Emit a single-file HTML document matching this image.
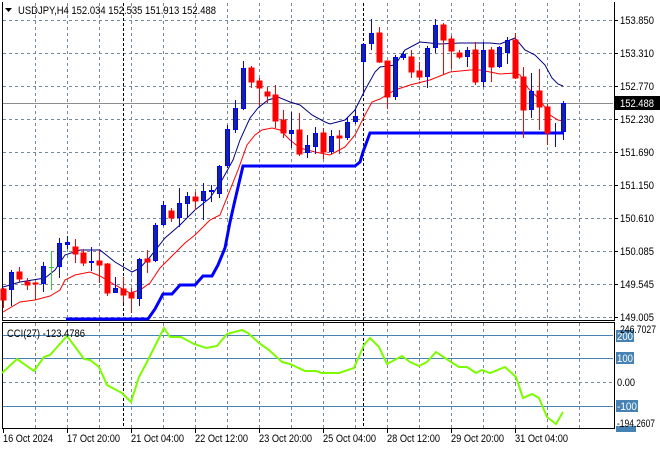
<!DOCTYPE html>
<html><head><meta charset="utf-8"><style>
html,body{margin:0;padding:0;background:#fff;}
svg{display:block;font-family:"Liberation Sans",sans-serif;}
</style></head><body>
<svg width="660" height="450" viewBox="0 0 660 450" xmlns="http://www.w3.org/2000/svg">
<rect width="660" height="450" fill="#fff"/>
<g stroke="#778899" stroke-width="1" stroke-dasharray="3,3" fill="none">
<path d="M3 20.5H613M3 53.5H613M3 86.5H613M3 119.5H613M3 152.5H613M3 185.5H613M3 218.5H613M3 251.5H613M3 284.5H613M3 317.5H613"/>
<path d="M35.5 3V320M67.5 3V320M99.5 3V320M131.5 3V320M163.5 3V320M195.5 3V320M227.5 3V320M259.5 3V320M291.5 3V320M323.5 3V320M355.5 3V320M387.5 3V320M419.5 3V320M451.5 3V320M483.5 3V320M515.5 3V320M547.5 3V320M579.5 3V320"/>
<path d="M35.5 323V428M67.5 323V428M99.5 323V428M131.5 323V428M163.5 323V428M195.5 323V428M227.5 323V428M259.5 323V428M291.5 323V428M323.5 323V428M355.5 323V428M387.5 323V428M419.5 323V428M451.5 323V428M483.5 323V428M515.5 323V428M547.5 323V428M579.5 323V428"/>
<path d="M3 382.5H613"/>
</g>
<g stroke="#000" stroke-dasharray="3,2"><path d="M123.5 3V428M363.5 3V428"/></g>
<path d="M3 103.5H613" stroke="#8c8c8c"/>
<g stroke="#000" fill="none"><path d="M2.5 2V320.5H614.5V2"/><path d="M2.5 322.5H614.5V428.5H2.5Z"/></g>
<polyline fill="none" stroke="#0000ff" stroke-width="3" points="66,319 148,319 155,309 163,294 172,294 180,285 195,285 203,276 212,276 218,265 225,248 230,222 235,200 243,166 355,166 360,162 363,152 370,133 563,133"/>
<polyline fill="none" stroke="#000080" stroke-width="1" points="3,287 20,282 45,278 55,270 65,255 80,250 100,250 115,262 132,272 140,268 150,257 165,238 180,225 195,210 210,198 222,180 233,160 240,140 250,118 258,108 268,100 278,97 290,102 300,105 312,115 325,122 330,124 345,120 355,110 365,90 375,72 380,67 395,65 405,50 420,42 440,44 460,43 490,43 500,44 505,42 515,38 525,50 535,55 545,65 552,78 558,84 563,86"/>
<polyline fill="none" stroke="#ff0000" stroke-width="1" points="3,312 20,302 35,300 50,296 60,290 65,280 75,275 90,272 100,276 115,285 130,293 140,290 150,283 160,268 170,258 185,243 195,235 210,220 220,215 230,190 238,170 247,145 255,135 262,130 272,128 280,130 290,140 300,148 315,152 330,155 345,147 355,135 365,115 372,102 380,99 395,90 410,85 430,80 450,72 470,70 480,70 500,74 515,73 520,75 528,88 540,100 550,115 558,120 563,121"/>
<g stroke-width="1">
<g stroke="#ff0000" fill="#ff0000">
<path d="M3.5 288V308M19.5 267V282M27.5 278V290M35.5 282V300M75.5 239V263M83.5 249V266M99.5 250V283M107.5 263V296M123.5 277V303M131.5 288V313M147.5 250V273M171.5 208V222M195.5 192V210M251.5 66V88M259.5 78V106M267.5 87V103M275.5 85V128M283.5 110V138M299.5 113V156M323.5 128V159M339.5 130V154M379.5 27V63M387.5 61V109M411.5 50V78M419.5 62V80M443.5 23V75M451.5 36V69M459.5 50V59M475.5 42V85M491.5 47V82M515.5 33V79M523.5 67V138M539.5 69V130M547.5 104V145"/>
<rect x="1" y="289" width="5" height="11"/><rect x="17" y="272" width="5" height="7"/><rect x="25" y="282" width="5" height="3"/><rect x="33" y="283" width="5" height="1"/>
<rect x="73" y="247" width="5" height="7"/><rect x="81" y="253" width="5" height="10"/><rect x="97" y="261" width="5" height="4"/><rect x="105" y="264" width="5" height="29"/>
<rect x="121" y="289" width="5" height="6"/><rect x="129" y="293" width="5" height="5"/><rect x="145" y="259" width="5" height="3"/><rect x="169" y="211" width="5" height="7"/>
<rect x="193" y="197" width="5" height="4"/><rect x="249" y="68" width="5" height="14"/><rect x="257" y="81" width="5" height="7"/><rect x="265" y="92" width="5" height="4"/>
<rect x="273" y="95" width="5" height="26"/><rect x="281" y="120" width="5" height="13"/><rect x="297" y="130" width="5" height="24"/><rect x="321" y="133" width="5" height="19"/>
<rect x="337" y="136" width="5" height="2"/><rect x="377" y="33" width="5" height="29"/><rect x="385" y="61" width="5" height="36"/><rect x="409" y="57" width="5" height="15"/>
<rect x="417" y="71" width="5" height="6"/><rect x="441" y="25" width="5" height="15"/><rect x="449" y="39" width="5" height="12"/><rect x="457" y="53" width="5" height="4"/>
<rect x="473" y="50" width="5" height="32"/><rect x="489" y="50" width="5" height="17"/><rect x="513" y="40" width="5" height="38"/><rect x="521" y="77" width="5" height="33"/>
<rect x="537" y="91" width="5" height="16"/><rect x="545" y="107" width="5" height="26"/>
</g>
<g stroke="#0000ff" fill="#14249e">
<path d="M11.5 270V306M43.5 262V292M59.5 238V278M67.5 236V249M91.5 247V271M115.5 277V293M139.5 258V306M155.5 223V262M163.5 201V226M179.5 188V227M187.5 192V217M203.5 183V220M211.5 185V202M219.5 165V198M227.5 125V168M235.5 100V133M243.5 61V110M291.5 112V148M307.5 135V158M315.5 127V154M331.5 130V154M347.5 117V140M355.5 109V124M363.5 43V95M371.5 19V50M395.5 55V100M403.5 51V60M427.5 46V88M435.5 19V53M467.5 47V67M483.5 42V87M499.5 46V68M507.5 37V64M531.5 73V118M555.5 123V147M563.5 101V140"/>
<rect x="9.5" y="272.5" width="4" height="17"/><rect x="41.5" y="266.5" width="4" height="17"/><rect x="57.5" y="243.5" width="4" height="23"/><rect x="65.5" y="242.5" width="4" height="2"/>
<rect x="89.5" y="261.5" width="4" height="1"/><rect x="113.5" y="288.5" width="4" height="4"/><rect x="137.5" y="259.5" width="4" height="39"/><rect x="153.5" y="225.5" width="4" height="35"/>
<rect x="161.5" y="205.5" width="4" height="19"/><rect x="177.5" y="203.5" width="4" height="14"/><rect x="185.5" y="196.5" width="4" height="7"/><rect x="201.5" y="191.5" width="4" height="9"/>
<rect x="209.5" y="190.5" width="4" height="1"/><rect x="217.5" y="166.5" width="4" height="27"/><rect x="225.5" y="129.5" width="4" height="36"/><rect x="233.5" y="108.5" width="4" height="21"/>
<rect x="241.5" y="68.5" width="4" height="40"/><rect x="289.5" y="130.5" width="4" height="3"/><rect x="305.5" y="145.5" width="4" height="7"/><rect x="313.5" y="133.5" width="4" height="13"/>
<rect x="329.5" y="136.5" width="4" height="15"/><rect x="345.5" y="122.5" width="4" height="15"/><rect x="353.5" y="116.5" width="4" height="5"/><rect x="361.5" y="44.5" width="4" height="17"/>
<rect x="369.5" y="33.5" width="4" height="10"/><rect x="393.5" y="57.5" width="4" height="39"/><rect x="401.5" y="54.5" width="4" height="3"/><rect x="425.5" y="48.5" width="4" height="28"/>
<rect x="433.5" y="25.5" width="4" height="22"/><rect x="465.5" y="50.5" width="4" height="6"/><rect x="481.5" y="50.5" width="4" height="31"/><rect x="497.5" y="47.5" width="4" height="19"/>
<rect x="505.5" y="40.5" width="4" height="12"/><rect x="529.5" y="91.5" width="4" height="18"/><rect x="553.5" y="132.5" width="4" height="1"/><rect x="561.5" y="103.5" width="4" height="28"/>
</g>
<path d="M51.5 251V290M49 267.5H54" stroke="#32cd32"/>
</g>
<g stroke="#4682b4"><path d="M3 335.5H613M3 358.5H613M3 406.5H613"/></g>
<polyline fill="none" stroke="#7cfc00" stroke-width="2" points="2,373 17,359 34,371 44,357 50,355 67,336 76,348 84,359 90,360 99,367 107,385 122,393 131,402 139,377 147,362 164,328 170,337 181,337 194,344 206,348 217,346 227,334 242,330 248,333 259,343 269,350 282,362 290,364 305,371 316,371 322,373 339,373 354,368 364,345 370,338 379,347 387,364 402,356 410,362 419,366 427,362 436,352 448,360 459,367 467,367 476,373 482,370 490,373 505,367 516,377 523,398 532,394 539,398 547,417 556,424 563,412"/>
<g font-size="11" fill="#000" lengthAdjust="spacingAndGlyphs">
<path d="M5 8H12L8.5 12Z" fill="#000"/>
<text x="18" y="14" textLength="198" lengthAdjust="spacingAndGlyphs">USDJPY,H4  152.034 152.535 151.913 152.488</text>
<text x="7" y="337" textLength="78" lengthAdjust="spacingAndGlyphs">CCI(27) -123.4786</text>
<g font-size="11">
<text x="620" y="24" textLength="34" lengthAdjust="spacingAndGlyphs">153.850</text><text x="620" y="57" textLength="34" lengthAdjust="spacingAndGlyphs">153.310</text><text x="620" y="90" textLength="34" lengthAdjust="spacingAndGlyphs">152.770</text>
<text x="620" y="123" textLength="34" lengthAdjust="spacingAndGlyphs">152.230</text><text x="620" y="156" textLength="34" lengthAdjust="spacingAndGlyphs">151.690</text><text x="620" y="189" textLength="34" lengthAdjust="spacingAndGlyphs">151.150</text>
<text x="620" y="222" textLength="34" lengthAdjust="spacingAndGlyphs">150.610</text><text x="620" y="255" textLength="34" lengthAdjust="spacingAndGlyphs">150.085</text><text x="620" y="288" textLength="34" lengthAdjust="spacingAndGlyphs">149.545</text><text x="620" y="321" textLength="34" lengthAdjust="spacingAndGlyphs">149.005</text>
<rect x="614" y="96" width="46" height="14" fill="#000"/><text x="620" y="107" fill="#fff" textLength="34" lengthAdjust="spacingAndGlyphs">152.488</text>
<rect x="616" y="330" width="18" height="12" fill="#4682b4"/><text x="617" y="340" fill="#fff" textLength="16" lengthAdjust="spacingAndGlyphs">200</text>
<text x="620" y="333" textLength="36" lengthAdjust="spacingAndGlyphs">246.7027</text>
<rect x="616" y="352" width="18" height="12" fill="#4682b4"/><text x="617" y="362" fill="#fff" textLength="16" lengthAdjust="spacingAndGlyphs">100</text>
<text x="617" y="386" textLength="18" lengthAdjust="spacingAndGlyphs">0.00</text>
<rect x="616" y="400" width="22" height="12" fill="#4682b4"/><text x="617" y="410" fill="#fff" textLength="20" lengthAdjust="spacingAndGlyphs">-100</text>
<rect x="616" y="426" width="20" height="6" fill="#4682b4"/>
<text x="617" y="427" textLength="38" lengthAdjust="spacingAndGlyphs">-194.2607</text>
<text x="3" y="442" textLength="50" lengthAdjust="spacingAndGlyphs">16 Oct 2024</text><text x="67" y="442" textLength="53" lengthAdjust="spacingAndGlyphs">17 Oct 20:00</text><text x="131" y="442" textLength="53" lengthAdjust="spacingAndGlyphs">21 Oct 04:00</text>
<text x="195" y="442" textLength="53" lengthAdjust="spacingAndGlyphs">22 Oct 12:00</text><text x="259" y="442" textLength="53" lengthAdjust="spacingAndGlyphs">23 Oct 20:00</text><text x="323" y="442" textLength="53" lengthAdjust="spacingAndGlyphs">25 Oct 04:00</text>
<text x="387" y="442" textLength="53" lengthAdjust="spacingAndGlyphs">28 Oct 12:00</text><text x="451" y="442" textLength="53" lengthAdjust="spacingAndGlyphs">29 Oct 20:00</text><text x="515" y="442" textLength="53" lengthAdjust="spacingAndGlyphs">31 Oct 04:00</text>
</g>
</g>
<g stroke="#000"><path d="M3.5 429V433M67.5 429V433M131.5 429V433M195.5 429V433M259.5 429V433M323.5 429V433M387.5 429V433M451.5 429V433M515.5 429V433M614 20.5H618M614 53.5H618M614 86.5H618M614 119.5H618M614 152.5H618M614 185.5H618M614 218.5H618M614 251.5H618M614 284.5H618M614 317.5H618"/></g>
</svg>
</body></html>
